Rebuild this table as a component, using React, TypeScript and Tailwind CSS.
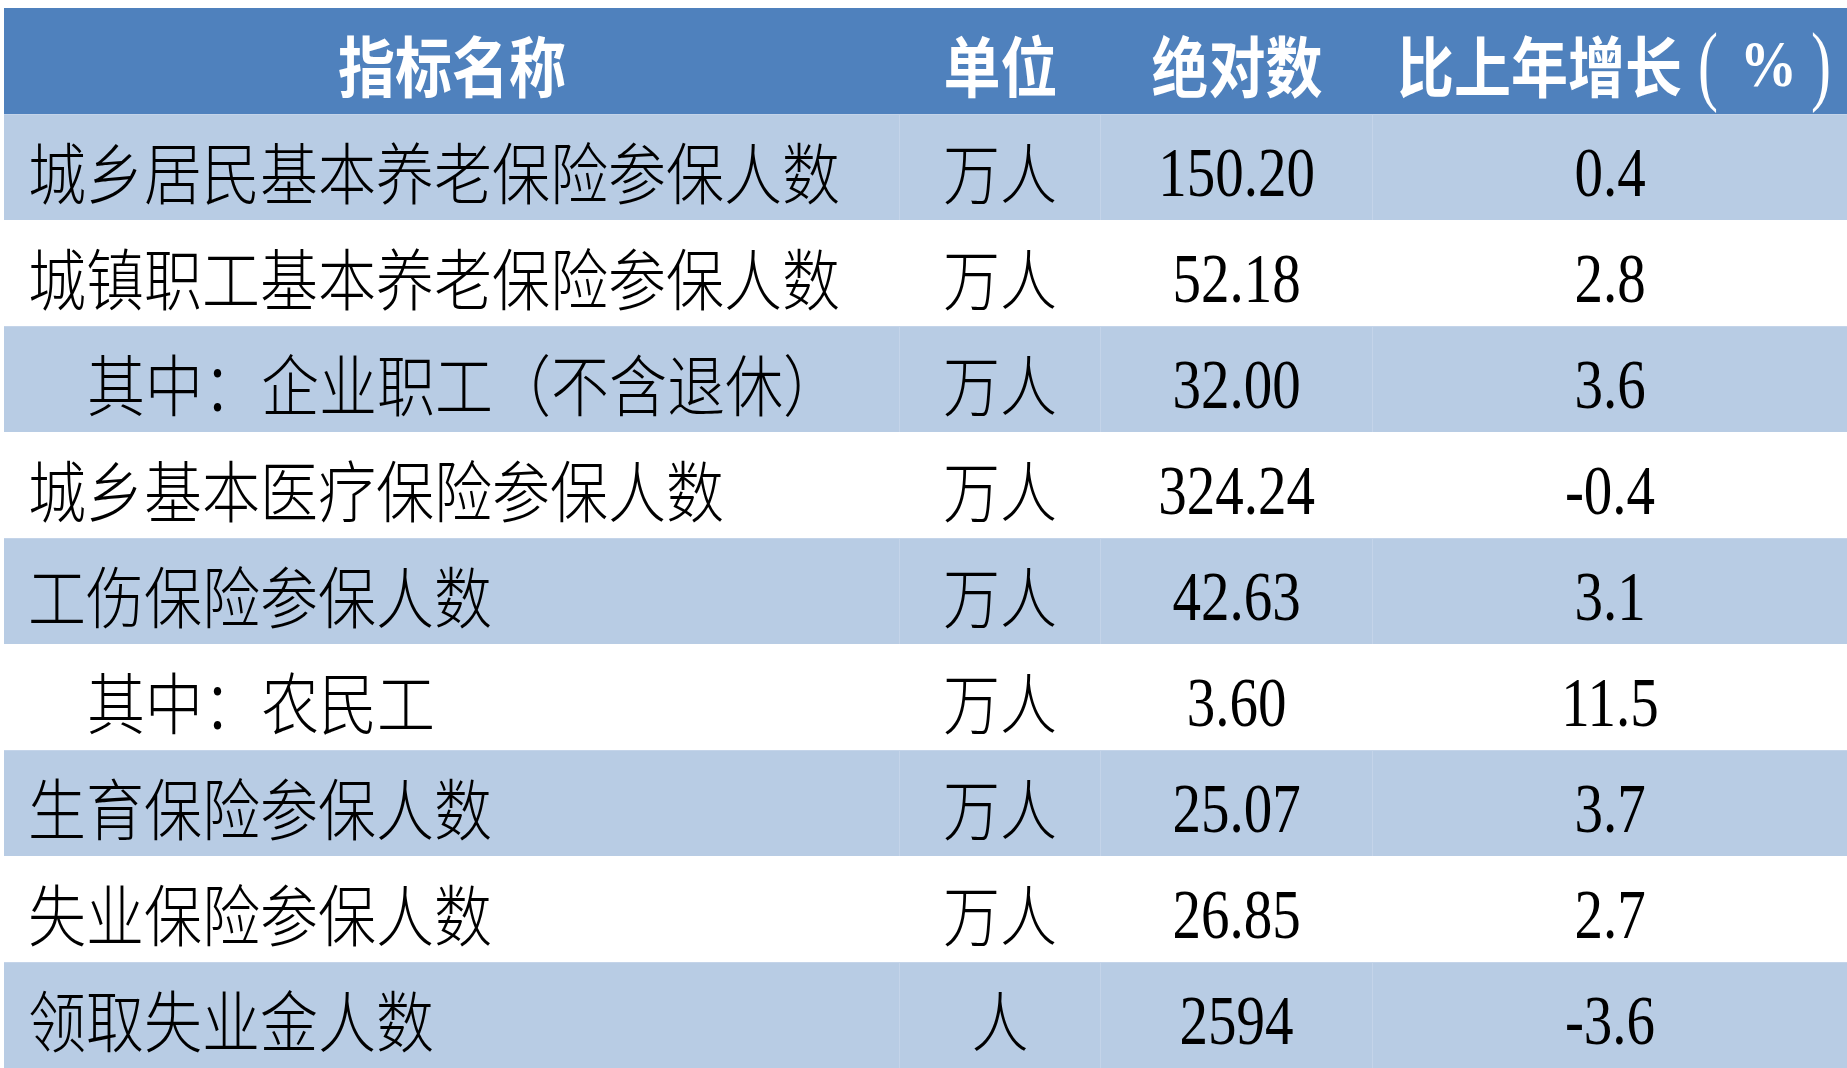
import React from "react";

interface Row {
  name: string;
  unit: string;
  value: string;
  growth: string;
  sub?: boolean;
}

const rows: Row[] = [
  { name: "城乡居民基本养老保险参保人数", unit: "万人", value: "150.20", growth: "0.4" },
  { name: "城镇职工基本养老保险参保人数", unit: "万人", value: "52.18", growth: "2.8" },
  { name: "其中：企业职工（不含退休）", unit: "万人", value: "32.00", growth: "3.6", sub: true },
  { name: "城乡基本医疗保险参保人数", unit: "万人", value: "324.24", growth: "-0.4" },
  { name: "工伤保险参保人数", unit: "万人", value: "42.63", growth: "3.1" },
  { name: "其中：农民工", unit: "万人", value: "3.60", growth: "11.5", sub: true },
  { name: "生育保险参保人数", unit: "万人", value: "25.07", growth: "3.7" },
  { name: "失业保险参保人数", unit: "万人", value: "26.85", growth: "2.7" },
  { name: "领取失业金人数", unit: "人", value: "2594", growth: "-3.6" },
];

const cjk = "font-['Noto_Sans_CJK_SC',sans-serif]";
const num = "font-['Liberation_Serif','Noto_Sans_CJK_SC',serif]";
const head = `h-[106px] bg-[#4f81bd] flex items-center justify-center text-white font-bold text-[57px] ${cjk}`;

const App = () => {
  return (
    <div className="w-[1847px] h-[1068px] overflow-hidden bg-white pt-[8px] pl-[4px]">
      <div className="grid grid-cols-[896px_201px_272px_474px] w-[1843px]">
        {/* Header */}
        <div className={head}>
          <span className="inline-block scale-y-[1.15] pt-[6px]">指标名称</span>
        </div>
        <div className={head}>
          <span className="inline-block scale-y-[1.15] pt-[6px]">单位</span>
        </div>
        <div className={head}>
          <span className="inline-block scale-y-[1.15] pt-[6px]">绝对数</span>
        </div>
        <div className={head}>
          <span className="inline-flex items-center scale-y-[1.15] pt-[6px] pl-[8px]">
            比上年增长
            <span className={`${num} inline-block font-normal text-[60px] scale-y-[1.3] ml-[16px]`}>(</span>
            <span className={`${num} ml-[22px]`}>%</span>
            <span className={`${num} inline-block font-normal text-[60px] scale-y-[1.3] ml-[14px]`}>)</span>
          </span>
        </div>

        {rows.map((row, index) => {
          const shaded = index % 2 === 0;
          const bg = shaded ? "bg-[#b8cce4] border-[#c4d4e9]" : "bg-white border-white";
          return (
            <React.Fragment key={index}>
              <div className={`h-[106px] border-t border-r ${bg} flex items-center pl-[24px] text-black font-light text-[58px] ${cjk}`}>
                <span className={`inline-block scale-y-[1.15] pt-[6px] ${row.sub ? "pl-[59px]" : ""}`}>
                  {row.name}
                </span>
              </div>
              <div className={`h-[106px] border-t border-r ${bg} flex items-center justify-center text-black font-light text-[57px] ${cjk}`}>
                <span className="inline-block scale-y-[1.15] pt-[6px]">{row.unit}</span>
              </div>
              <div className={`h-[106px] border-t border-r ${bg} flex items-center justify-center text-black text-[57px] ${num}`}>
                <span className="inline-block scale-y-[1.22] pt-[8px]">{row.value}</span>
              </div>
              <div className={`h-[106px] border-t ${bg} flex items-center justify-center text-black text-[57px] ${num}`}>
                <span className="inline-block scale-y-[1.22] pt-[8px]">{row.growth}</span>
              </div>
            </React.Fragment>
          );
        })}
      </div>
    </div>
  );
};

export default App;
